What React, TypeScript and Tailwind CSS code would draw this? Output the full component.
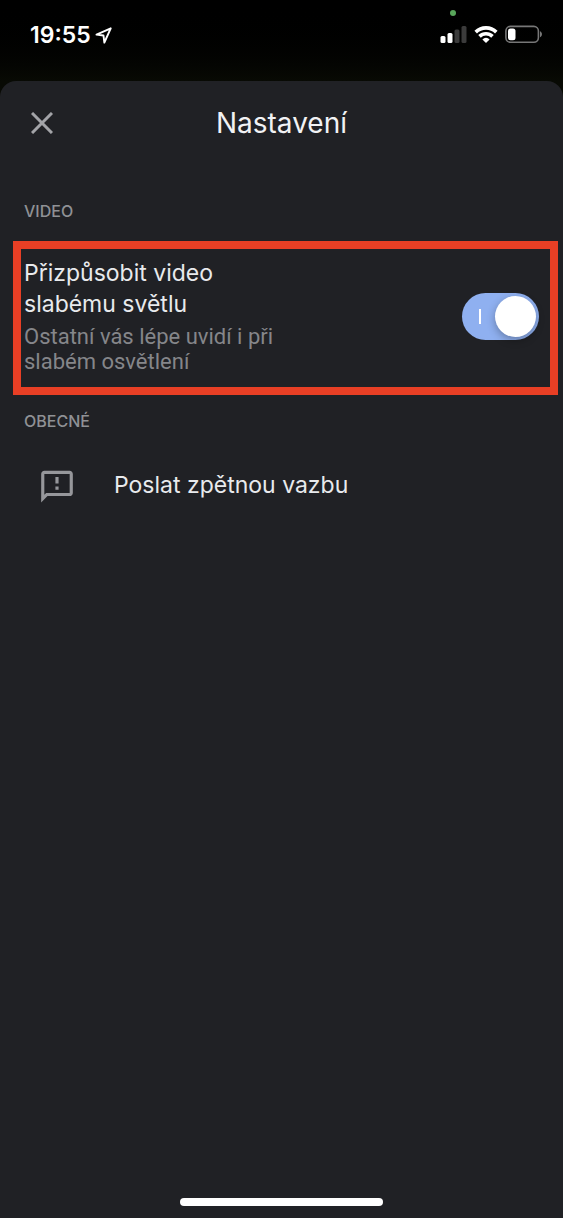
import { useState } from "react";

function StatusBar() {
  return (
    <header className="relative flex h-[81px] shrink-0 items-start justify-between bg-linear-to-b from-black to-[#080a04] pr-5 pl-[30px] text-white">
      <span className="absolute top-[10px] right-[107px] size-[6px] rounded-full bg-[#58a55a]" />
      <div className="flex items-center gap-1 pt-[21px]">
        <time className="font-['Inter',sans-serif] text-[23px] leading-7 font-semibold">19:55</time>
        <svg viewBox="0 0 16 16" className="size-[17px]" fill="none" stroke="currentColor" strokeWidth="1.8" strokeLinejoin="round" aria-hidden="true">
          <path d="M14.800 1.200 1.400 7.200l6.600.8.800 6.600z" />
        </svg>
      </div>
      <div className="flex items-center gap-[7px] pt-[25px]">
        <svg viewBox="0 0 27 18" className="h-[18px] w-[27px]" fill="currentColor" aria-hidden="true">
          <rect x="0.5" y="11" width="5" height="7" rx="1.5" />
          <rect x="7.5" y="8" width="5" height="10" rx="1.5" />
          <rect x="14.5" y="4.5" width="5" height="13.5" rx="1.5" fill="#3b3b3b" />
          <rect x="21.5" y="1" width="5" height="17" rx="1.5" fill="#3b3b3b" />
        </svg>
        <svg viewBox="0 0 24 18" className="h-[18px] w-6" fill="none" stroke="currentColor" strokeWidth="3.6" aria-hidden="true">
          <path d="M1.700 7.100a14.600 14.600 0 0 1 20.600 0" />
          <path d="M5.500 11.400a9.300 9.300 0 0 1 13 0" />
          <path d="M8.400 14.400a5 5 0 0 1 7.200 0L12 18z" fill="currentColor" stroke="none" />
        </svg>
        <svg viewBox="0 0 38 18" className="h-[18px] w-[38px]" fill="none" aria-hidden="true">
          <rect x="0.9" y="1.4" width="32.500" height="15.800" rx="4.500" stroke="#777777" strokeWidth="1.600" />
          <rect x="3" y="3.500" width="7.500" height="11.800" rx="2.500" fill="white" />
          <path d="M35 6.200c2.600.8 2.600 5.200 0 6z" fill="#777777" />
        </svg>
      </div>
    </header>
  );
}

function SectionTitle({ children }: { children: string }) {
  return <h2 className="pl-6 text-base leading-6 font-medium text-[#8f9195]">{children}</h2>;
}

function LowLightSetting() {
  const [enabled, setEnabled] = useState(true);
  return (
    <div className="mt-[18px] mr-[5px] ml-[13px] flex items-center justify-between border-8 border-[#e83f25] pt-[9px] pr-[11px] pb-[13px] pl-[3px]">
      <label htmlFor="low-light" className="w-[270px]">
        <span className="block text-[23px] leading-[31px] text-[#e8eaed]">
          Přizpůsobit video
          <br />
          slabému světlu
        </span>
        <span className="mt-1 block font-['Roboto',sans-serif] text-[22px] leading-[25px] text-[#85868a]">
          Ostatní vás lépe uvidí i při
          <br />
          slabém osvětlení
        </span>
      </label>
      <span className="relative flex h-[47px] w-[77px] shrink-0">
        <input
          id="low-light"
          type="checkbox"
          role="switch"
          checked={enabled}
          onChange={(event) => setEnabled(event.target.checked)}
          className="peer size-full appearance-none rounded-full bg-[#5f6368] checked:bg-[#8fb0f0]"
        />
        <span className="pointer-events-none absolute top-4 left-[17px] h-[15px] w-[2px] bg-white opacity-0 peer-checked:opacity-100" />
        <span className="pointer-events-none absolute top-[3px] left-[3px] size-[41px] rounded-full bg-white shadow-[0_3px_8px_rgba(0,0,0,0.3)] peer-checked:left-[33px]" />
      </span>
    </div>
  );
}

export default function App() {
  return (
    <div className="flex min-h-screen flex-col bg-[#080a04] font-['Inter','Noto_Sans',sans-serif]">
      <StatusBar />
      <main className="flex grow flex-col rounded-t-[16px] bg-[#202125]">
        <div className="grid h-[84px] grid-cols-[84px_1fr_84px] items-center">
          <button type="button" aria-label="Zavřít" className="flex size-[84px] items-center justify-center text-[#a3a4a8]">
            <svg viewBox="0 0 22 22" className="size-[22px]" stroke="currentColor" strokeWidth="3" aria-hidden="true">
              <path d="m1 1 20 20M21 1 1 21" />
            </svg>
          </button>
          <h1 className="text-center text-[28px] leading-9 text-[#f1f2f4]">Nastavení</h1>
        </div>
        <section className="pt-[34px]">
          <SectionTitle>VIDEO</SectionTitle>
          <LowLightSetting />
        </section>
        <section className="pt-[14px]">
          <SectionTitle>OBECNÉ</SectionTitle>
          <button type="button" className="mt-5 flex h-16 w-full items-center gap-[38px] pl-[38px] text-left text-[23px] text-[#e8eaed]">
            <svg viewBox="0 -1 24 24" className="size-[38px] text-[#96979b]" fill="currentColor" aria-hidden="true">
              <path d="M20 2H4c-1.1 0-1.99.9-1.99 2L2 22l4-4h14c1.1 0 2-.9 2-2V4c0-1.100-.9-2-2-2zm0 14H5.170L4 17.170V4h16v12zM11 12h2v2h-2zm0-6h2v4h-2z" />
            </svg>
            Poslat zpětnou vazbu
          </button>
        </section>
        <footer className="mt-auto flex justify-center pb-3">
          <div className="h-2 w-[36%] rounded-full bg-white" />
        </footer>
      </main>
    </div>
  );
}
